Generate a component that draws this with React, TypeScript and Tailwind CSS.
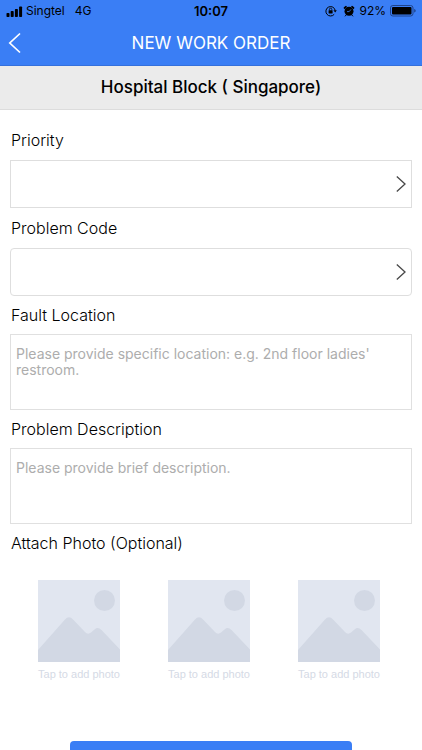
import React, { useState } from 'react';

interface FieldProps {
  id: string;
  label: string;
}

interface SelectFieldProps extends FieldProps {
  options: string[];
  rounded?: boolean;
}

interface TextFieldProps extends FieldProps {
  placeholder: string;
}

const PRIORITIES = ['Low', 'Medium', 'High'];
const PROBLEM_CODES = ['Electrical', 'Plumbing', 'Air Conditioning'];

const StatusBar: React.FC = () => (
  <div className="grid grid-cols-3 items-center h-5 px-[6px] pt-[2px] text-xs leading-4 text-black">
    <div className="flex items-center">
      <svg width="17" height="11" viewBox="0 0 17 11" aria-hidden="true">
        <rect x="0.5" y="7" width="3" height="4" rx="0.8" />
        <rect x="4.7" y="5" width="3" height="6" rx="0.8" />
        <rect x="8.9" y="3" width="3" height="8" rx="0.8" />
        <rect x="13.1" y="0.5" width="3" height="10.5" rx="0.8" />
      </svg>
      <span className="ml-[3px]">Singtel</span>
      <span className="ml-[10px]">4G</span>
    </div>
    <div className="text-center text-[13px] font-semibold">10:07</div>
    <div className="flex items-center justify-end">
      {/* Rotation lock */}
      <svg width="12" height="12" viewBox="0 0 12 12" fill="none" stroke="black" aria-hidden="true">
        <path d="M9.2 9.3A4.7 4.7 0 1 1 10.2 5.4" strokeWidth="1" />
        <path d="M8.4 5.2h3.4l-1.6 2.3z" fill="black" stroke="none" />
        <rect x="3.6" y="5.3" width="4" height="3.2" rx="0.4" fill="black" stroke="none" />
        <path d="M4.4 5.4V4.4a1.2 1.2 0 0 1 2.4 0v1" strokeWidth="0.8" />
      </svg>
      {/* Alarm */}
      <svg className="ml-[6px]" width="12" height="12" viewBox="0 0 12 12" fill="none" stroke="black" aria-hidden="true">
        <circle cx="6" cy="6.3" r="4.5" fill="black" stroke="none" />
        <path d="M1.5 3 3 1.7M9 1.7l1.5 1.3" strokeWidth="1.7" strokeLinecap="round" />
        <path d="M3 10.2 2.3 11M9 10.2l.7.8" strokeWidth="1" strokeLinecap="round" />
        <path d="M4 6.6h2.2L8 4.4" stroke="#3a7ef5" strokeWidth="0.8" />
      </svg>
      <span className="ml-1">92%</span>
      <svg className="ml-1" width="26" height="12" viewBox="0 0 26 12" aria-hidden="true">
        <rect x="0.5" y="0.5" width="22.5" height="10.5" rx="2.4" fill="none" stroke="#1f438a" />
        <rect x="2" y="2" width="19.5" height="7.5" rx="1" />
        <path d="M24.2 4v3.6c1-.3 1.5-1 1.5-1.8s-.5-1.5-1.5-1.8z" fill="#1f438a" />
      </svg>
    </div>
  </div>
);

const SelectField: React.FC<SelectFieldProps> = ({ id, label, options, rounded }) => {
  const [value, setValue] = useState('');

  return (
    <div>
      <label htmlFor={id} className="flex items-center h-10 pl-px text-base font-light">
        {label}
      </label>
      <div className="relative">
        <select
          id={id}
          value={value}
          onChange={(e) => setValue(e.target.value)}
          className={`block w-full h-12 appearance-none bg-white border border-[#dedede] px-3 text-base outline-none ${rounded ? 'rounded-[4px]' : 'rounded-none'}`}
        >
          <option value=""></option>
          {options.map((option) => (
            <option key={option} value={option}>{option}</option>
          ))}
        </select>
        <svg
          className="absolute right-[6px] top-4 pointer-events-none"
          width="10"
          height="16"
          viewBox="0 0 10 16"
          fill="none"
          stroke="#484848"
          strokeWidth="1.3"
          aria-hidden="true"
        >
          <path d="M0.8 0.6 9 8 0.8 15.4" />
        </svg>
      </div>
    </div>
  );
};

const TextField: React.FC<TextFieldProps> = ({ id, label, placeholder }) => (
  <div>
    <label htmlFor={id} className="flex items-center h-[38px] pl-px text-base font-light">
      {label}
    </label>
    <textarea
      id={id}
      placeholder={placeholder}
      className="block w-full h-[76px] resize-none bg-white border border-[#e0e0e0] px-[5px] pt-[11px] text-sm leading-4 outline-none placeholder:text-[#adadad]"
    />
  </div>
);

const PhotoSlot: React.FC = () => (
  <button type="button" className="flex flex-col items-center">
    <svg width="82" height="82" viewBox="0 0 82 82" aria-hidden="true">
      <rect width="82" height="82" fill="#e1e6f0" />
      <circle cx="66.5" cy="20.5" r="10.5" fill="#d2d8e4" />
      <path d="M0 70 27 39.5Q31 35 35 39.5L47 52Q50 55 53 52.5L56.5 49.5Q60 46.5 63.5 50L82 69.5V82H0z" fill="#d2d8e4" />
    </svg>
    <span className="mt-1 font-['Liberation_Sans',sans-serif] text-[11px] leading-4 text-[#d5dae5] whitespace-nowrap">
      Tap to add photo
    </span>
  </button>
);

export default function App() {
  return (
    <div className="flex flex-col h-screen bg-white text-black font-['Inter',sans-serif]">
      <header className="shrink-0 bg-[#3a7ef5] border-b border-[#3470dc]">
        <StatusBar />
        <div className="grid grid-cols-[40px_1fr_40px] items-center h-[45px]">
          <button type="button" aria-label="Back" className="flex pl-2">
            <svg width="14" height="22" viewBox="0 0 14 22" fill="none" stroke="white" strokeWidth="1.7" aria-hidden="true">
              <path d="M12 1.5 1.8 11 12 20.5" />
            </svg>
          </button>
          <h1 className="text-center text-[17px] leading-6 text-white">NEW WORK ORDER</h1>
        </div>
      </header>

      <h2 className="shrink-0 flex items-center justify-center h-11 pt-px bg-[#ebebeb] border-b border-[#dcdcdc] text-[17px] font-medium">
        Hospital Block ( Singapore)
      </h2>

      <main className="flex-1 min-h-0 overflow-y-auto [scrollbar-width:none]">
        <form className="px-[10px] pt-[10px] pb-6">
          <SelectField id="priority" label="Priority" options={PRIORITIES} />
          <SelectField id="problem-code" label="Problem Code" options={PROBLEM_CODES} rounded />
          <TextField
            id="fault-location"
            label="Fault Location"
            placeholder="Please provide specific location: e.g. 2nd floor ladies' restroom."
          />
          <TextField
            id="problem-description"
            label="Problem Description"
            placeholder="Please provide brief description."
          />

          <h3 className="flex items-center h-[38px] pl-px text-base font-light">Attach Photo (Optional)</h3>
          <div className="flex justify-between pl-7 pr-8 pt-[18px]">
            <PhotoSlot />
            <PhotoSlot />
            <PhotoSlot />
          </div>

          <button
            type="submit"
            aria-label="Submit"
            className="block w-[70%] h-12 mt-[59px] mx-auto rounded-[4px] bg-[#3a7ef5]"
          />
        </form>
      </main>
    </div>
  );
}
